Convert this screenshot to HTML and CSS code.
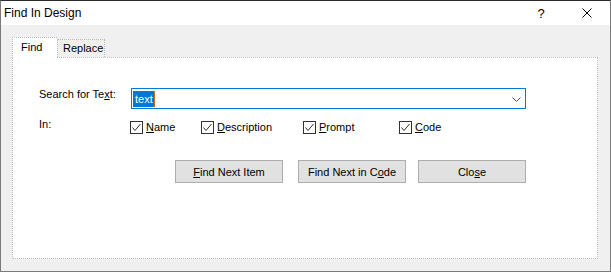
FILE: index.html
```html
<!DOCTYPE html>
<html>

<head>
  <title>Find In Design</title>
  <link rel="stylesheet" href="styles.css">
</head>

<body>
  <div class="window">
    <div class="titlebar">
      <span class="title">Find In Design</span>
      <span class="caption-btn help">?</span>
      <span class="caption-btn">
        <svg width="10" height="10" viewBox="0 0 10 10">
          <path d="M0.5 0.5 L9.5 9.5 M9.5 0.5 L0.5 9.5" stroke="#000" stroke-width="1" fill="none" />
        </svg>
      </span>
    </div>
    <div class="client">
      <div class="tabs">
        <div class="tab active">Find</div>
        <div class="tab">Replace</div>
      </div>
      <div class="tab-page">
        <div class="form">
          <label class="field-label">Search for Te<u>x</u>t:</label>
          <div class="combo">
            <span class="combo-text"><span class="sel">text</span><span class="caret"></span></span>
            <svg class="combo-arrow" width="9" height="5" viewBox="0 0 9 5">
              <path d="M0.5 0.5 L4.5 4.5 L8.5 0.5" stroke="#555" stroke-width="1" fill="none" />
            </svg>
          </div>
          <span class="field-label in-label">In:</span>
          <div class="checks">
            <label class="check"><span class="box"><svg width="11" height="11" viewBox="0 0 11 11"><path d="M1.5 5.5 L4 8.5 L9.5 2" stroke="#333" stroke-width="1" fill="none" /></svg></span><span><u>N</u>ame</span></label>
            <label class="check"><span class="box"><svg width="11" height="11" viewBox="0 0 11 11"><path d="M1.5 5.5 L4 8.5 L9.5 2" stroke="#333" stroke-width="1" fill="none" /></svg></span><span><u>D</u>escription</span></label>
            <label class="check"><span class="box"><svg width="11" height="11" viewBox="0 0 11 11"><path d="M1.5 5.5 L4 8.5 L9.5 2" stroke="#333" stroke-width="1" fill="none" /></svg></span><span><u>P</u>rompt</span></label>
            <label class="check"><span class="box"><svg width="11" height="11" viewBox="0 0 11 11"><path d="M1.5 5.5 L4 8.5 L9.5 2" stroke="#333" stroke-width="1" fill="none" /></svg></span><span><u>C</u>ode</span></label>
          </div>
        </div>
        <div class="buttons">
          <button class="btn btn-next"><u>F</u>ind Next Item</button>
          <button class="btn btn-code">Find Next in C<u>o</u>de</button>
          <button class="btn">Clo<u>s</u>e</button>
        </div>
      </div>
    </div>
  </div>
</body>

</html>
```

FILE: styles.css
```css
html,
body {
  margin: 0;
  padding: 0;
}

body {
  font-family: "Liberation Sans", Arial, sans-serif;
  font-size: 11px;
  color: #000;
  background: #f0f0f0;
}

.window {
  box-sizing: border-box;
  width: 611px;
  height: 272px;
  border: 1px solid #7a7a7a;
  border-top-color: #2b2b2b;
  background: #f0f0f0;
}

.titlebar {
  display: flex;
  align-items: center;
  height: 24px;
  background: #fff;
}

.title {
  flex: 1;
  padding-left: 3px;
  font-size: 12px;
}

.caption-btn {
  display: flex;
  align-items: center;
  justify-content: center;
  width: 46px;
  height: 24px;
}

.help {
  font-size: 13px;
}

.client {
  padding: 12px 12px 0 11px;
}

.tabs {
  display: flex;
  align-items: flex-end;
  height: 20px;
}

.tab {
  box-sizing: border-box;
  height: 18px;
  width: 48px;
  padding-left: 5px;
  line-height: 17px;
  border: 1px dotted #bcbcbc;
  border-bottom: 0;
  background: #f0f0f0;
}

.tab.active {
  position: relative;
  z-index: 1;
  width: 45px;
  height: 21px;
  margin-bottom: -1px;
  padding-left: 8px;
  line-height: 19px;
  background: #fff;
  border-right: 0;
}

.tab-page {
  box-sizing: border-box;
  height: 202px;
  padding: 30px 0 0 26px;
  border: 1px dotted #bcbcbc;
  background: #fff;
}

.form {
  display: grid;
  grid-template-columns: 92px 395px;
  grid-template-rows: 21px 13px;
  row-gap: 12px;
}

.field-label {
  line-height: 13px;
  align-self: start;
}

.in-label {
  margin-top: -3px;
}

.combo {
  box-sizing: border-box;
  display: flex;
  align-items: center;
  height: 21px;
  padding: 1px 4px 0 1px;
  border: 1px solid #0078d7;
  background: #fff;
}

.combo-text {
  flex: 1;
  display: flex;
  align-items: center;
  height: 17px;
}

.sel {
  padding: 0 1px 0 2px;
  line-height: 16px;
  background: #0078d7;
  color: #fff;
}

.caret {
  width: 1px;
  height: 16px;
  background: #c46a1c;
}

.check {
  display: flex;
  align-items: center;
  gap: 3px;
  line-height: 13px;
}

.checks {
  display: grid;
  grid-template-columns: 71px 102px 96px auto;
  margin-left: -1px;
}

.box {
  box-sizing: border-box;
  display: flex;
  align-items: center;
  justify-content: center;
  width: 13px;
  height: 13px;
  border: 1px solid #333;
  background: #fff;
}

.buttons {
  display: flex;
  margin: 26px 0 0 136px;
}

.btn {
  box-sizing: border-box;
  width: 108px;
  height: 23px;
  padding: 0;
  font-family: inherit;
  font-size: 11px;
  color: #000;
  background: #e1e1e1;
  border: 1px solid #adadad;
  border-radius: 0;
}

.btn-next {
  margin-right: 15px;
}

.btn-code {
  margin-right: 12px;
}
```
